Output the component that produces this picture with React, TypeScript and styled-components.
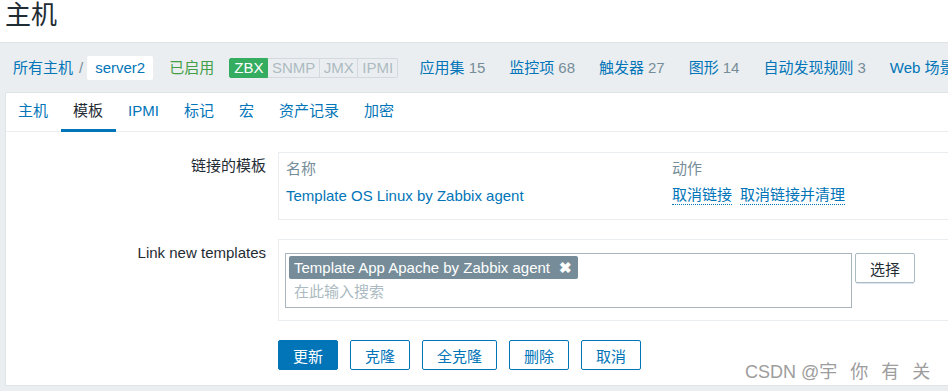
import React from "react";
import styled, { createGlobalStyle } from "styled-components";

const GlobalStyle = createGlobalStyle`
    html, body {
        margin: 0;
        padding: 0;
        background: #ffffff;
        overflow: hidden;
    }
    body {
        font-family: "Liberation Sans", Arial, "Noto Sans CJK SC", sans-serif;
        font-size: 15px;
        color: #1f2c33;
    }
`;

const BLUE = "#0275b8";
const GRAY_TEXT = "#768d99";

interface Counter {
    label: string;
    count?: number;
}

const counters: Counter[] = [
    { label: "应用集", count: 15 },
    { label: "监控项", count: 68 },
    { label: "触发器", count: 27 },
    { label: "图形", count: 14 },
    { label: "自动发现规则", count: 3 },
    { label: "Web 场景" },
];

const tabs = ["主机", "模板", "IPMI", "标记", "宏", "资产记录", "加密"];

const interfaces = [
    { name: "ZBX", on: true },
    { name: "SNMP", on: false },
    { name: "JMX", on: false },
    { name: "IPMI", on: false },
];

const App = () => {
    return (
        <StyledPage>
            <GlobalStyle />
            <StyledTitle>主机</StyledTitle>
            <StyledMain>
                <StyledNav>
                    <StyledCrumbs>
                        <StyledLink>所有主机</StyledLink>
                        <StyledSlash>/</StyledSlash>
                        <StyledCurrent>server2</StyledCurrent>
                    </StyledCrumbs>
                    <StyledStatus>已启用</StyledStatus>
                    <StyledAvail>
                        {interfaces.map((i) => (
                            <StyledAvailItem key={i.name} $on={i.on}>{i.name}</StyledAvailItem>
                        ))}
                    </StyledAvail>
                    {counters.map((c) => (
                        <StyledCounter key={c.label}>
                            <StyledLink>{c.label}</StyledLink>
                            {c.count !== undefined && <StyledCount>{c.count}</StyledCount>}
                        </StyledCounter>
                    ))}
                </StyledNav>

                <StyledPanel>
                    <StyledTabs>
                        {tabs.map((t) => (
                            <StyledTab key={t} $active={t === "模板"}>{t}</StyledTab>
                        ))}
                    </StyledTabs>

                    <StyledForm>
                        <StyledRow>
                            <StyledLabel>链接的模板</StyledLabel>
                            <StyledLinkedBox>
                                <StyledHead>名称</StyledHead>
                                <StyledHead>动作</StyledHead>
                                <StyledCell>
                                    <StyledLink>Template OS Linux by Zabbix agent</StyledLink>
                                </StyledCell>
                                <StyledCell>
                                    <StyledActions>
                                        <StyledDotted>取消链接</StyledDotted>
                                        <StyledDotted>取消链接并清理</StyledDotted>
                                    </StyledActions>
                                </StyledCell>
                            </StyledLinkedBox>
                        </StyledRow>

                        <StyledRow>
                            <StyledLabel>Link new templates</StyledLabel>
                            <StyledNewBox>
                                <StyledMultiSelect>
                                    <StyledChip>
                                        Template App Apache by Zabbix agent
                                        <StyledChipClose>✖</StyledChipClose>
                                    </StyledChip>
                                    <StyledPlaceholder>在此输入搜索</StyledPlaceholder>
                                </StyledMultiSelect>
                                <StyledSelectButton>选择</StyledSelectButton>
                            </StyledNewBox>
                        </StyledRow>

                        <StyledButtons>
                            <StyledButton $primary>更新</StyledButton>
                            <StyledButton>克隆</StyledButton>
                            <StyledButton $wide>全克隆</StyledButton>
                            <StyledButton>删除</StyledButton>
                            <StyledButton>取消</StyledButton>
                        </StyledButtons>
                    </StyledForm>
                    <StyledWatermark>
                        CSDN @<StyledWatermarkName>宇 你 有 关</StyledWatermarkName>
                    </StyledWatermark>
                </StyledPanel>
            </StyledMain>
        </StyledPage>
    );
};

const StyledPage = styled.div`
    width: 1000px;
    height: 391px;
    display: flex;
    flex-direction: column;
`;

const StyledTitle = styled.h1`
    margin: 0;
    height: 42px;
    padding-left: 5px;
    font-size: 26px;
    font-weight: 400;
    line-height: 30px;
    color: #1f2c33;
`;

const StyledMain = styled.main`
    flex: 1;
    background: #ebeef0;
    border-top: 1px solid #dfe4e7;
`;

const StyledNav = styled.div`
    height: 49px;
    display: flex;
    align-items: center;
    padding-left: 13px;
    gap: 24px;
    white-space: nowrap;
    line-height: 18px;
`;

const StyledCrumbs = styled.div`
    display: flex;
    align-items: center;
`;

const StyledLink = styled.span`
    color: ${BLUE};
`;

const StyledSlash = styled.span`
    color: ${GRAY_TEXT};
    margin: 0 4px 0 6px;
`;

const StyledCurrent = styled.span`
    background: #ffffff;
    color: ${BLUE};
    border-radius: 2px;
    padding: 3px 8px;
    height: 18px;
`;

const StyledStatus = styled.span`
    color: #429e47;
    margin-left: -8px;
`;

const StyledAvail = styled.div`
    display: flex;
    margin-left: -9px;
    margin-right: -2px;
`;

const StyledAvailItem = styled.span<{ $on: boolean }>`
    height: 18px;
    line-height: 18px;
    padding: 0 3.5px 0 4px;
    font-size: 15px;
    color: ${({ $on }) => ($on ? "#ffffff" : "#acbbc2")};
    background: ${({ $on }) => ($on ? "#34ad60" : "#ebeef0")};
    border: 1px solid ${({ $on }) => ($on ? "#34ad60" : "#d3d9dc")};
    border-left-width: ${({ $on }) => ($on ? "1px" : "0")};
    &:first-child {
        border-radius: 2px 0 0 2px;
    }
    &:last-child {
        border-radius: 0 2px 2px 0;
    }
`;

const StyledCounter = styled.span`
    display: inline-flex;
    gap: 4px;
`;

const StyledCount = styled.span`
    color: ${GRAY_TEXT};
`;

const StyledPanel = styled.section`
    position: relative;
    margin-left: 5px;
    height: 294px;
    background: #ffffff;
    border: 1px solid #dfe4e7;
    border-right: none;
    box-sizing: border-box;
`;

const StyledTabs = styled.nav`
    display: flex;
    height: 38px;
    border-bottom: 1px solid #ebeef0;
`;

const StyledTab = styled.span<{ $active: boolean }>`
    padding: 0 13px 0 12px;
    line-height: 36px;
    color: ${({ $active }) => ($active ? "#1f2c33" : BLUE)};
    border-bottom: 3px solid ${({ $active }) => ($active ? BLUE : "transparent")};
    margin-bottom: -1px;
`;

const StyledForm = styled.div`
    padding-top: 20px;
    display: flex;
    flex-direction: column;
    gap: 19px;
`;

const StyledRow = styled.div`
    display: grid;
    grid-template-columns: 260px 1fr;
    column-gap: 12px;
`;

const StyledLabel = styled.label`
    text-align: right;
    padding-top: 5px;
    line-height: 18px;
`;

const StyledLinkedBox = styled.div`
    display: grid;
    grid-template-columns: 386px 1fr;
    row-gap: 8px;
    border: 1px solid #ebeef0;
    padding: 7px 7px 13px;
    line-height: 18px;
`;

const StyledHead = styled.div`
    color: ${GRAY_TEXT};
`;

const StyledCell = styled.div`
    line-height: 20px;
`;

const StyledActions = styled.div`
    display: flex;
    gap: 8px;
`;

const StyledDotted = styled.span`
    color: ${BLUE};
    border-bottom: 1px dotted ${BLUE};
    line-height: 18px;
`;

const StyledNewBox = styled.div`
    display: flex;
    align-items: flex-start;
    gap: 3px;
    border: 1px solid #ebeef0;
    padding: 13px 6px 12px;
`;

const StyledMultiSelect = styled.div`
    width: 559px;
    height: 49px;
    border: 1px solid #a8b5bc;
    padding: 2px 3px;
    box-sizing: content-box;
    display: flex;
    flex-direction: column;
    align-items: flex-start;
    gap: 2px;
`;

const StyledChip = styled.span`
    display: inline-flex;
    align-items: center;
    height: 23px;
    padding: 0 6px 0 5px;
    background: #768d99;
    color: #ffffff;
    border-radius: 2px;
    line-height: 23px;
`;

const StyledChipClose = styled.span`
    margin-left: 9px;
    font-size: 15px;
    font-weight: 700;
`;

const StyledPlaceholder = styled.span`
    color: #acbbc2;
    padding-left: 5px;
    line-height: 22px;
`;

const StyledSelectButton = styled.button`
    width: 60px;
    height: 30px;
    background: #ffffff;
    border: 1px solid #acbbc2;
    border-radius: 2px;
    font: inherit;
    color: #1f2c33;
    padding: 0;
    box-shadow: 0 2px 0 -1px #d7e7f3;
`;

const StyledButtons = styled.div`
    display: flex;
    gap: 12px;
    padding-left: 272px;
`;

const StyledButton = styled.button<{ $primary?: boolean; $wide?: boolean }>`
    width: ${({ $wide }) => ($wide ? "75px" : "60px")};
    height: 30px;
    padding: 0;
    font: inherit;
    border-radius: 2px;
    border: 1px solid ${BLUE};
    background: ${({ $primary }) => ($primary ? BLUE : "#ffffff")};
    color: ${({ $primary }) => ($primary ? "#ffffff" : BLUE)};
`;

const StyledWatermark = styled.div`
    position: absolute;
    left: 739px;
    top: 269px;
    font-size: 18px;
    line-height: 20px;
    color: #9d9d9d;
    white-space: nowrap;
`;

const StyledWatermarkName = styled.span`
    word-spacing: 8px;
`;

export default App;
